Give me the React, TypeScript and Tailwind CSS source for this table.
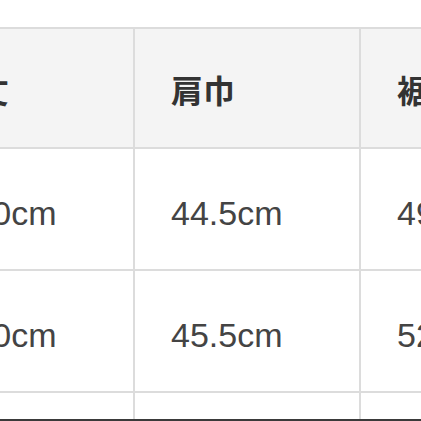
const header = ["着丈", "肩巾", "裾幅"];

const rows = [
  ["70.0cm", "44.5cm", "49.0cm"],
  ["72.0cm", "45.5cm", "52.0cm"],
  ["74.0cm", "46.5cm", "55.0cm"],
];

export default function App() {
  return (
    <div className="flex h-[421px] w-[421px] flex-col overflow-hidden bg-white">
      <div className="flex-1 overflow-hidden">
        {/* size chart; the left column runs off the edge of the crop */}
        <div className="ml-[-93px] mt-[27px] grid w-max grid-cols-[224px_224px_224px] gap-[2px] bg-[#dcdcdc] p-[2px]">
          {header.map((h) => (
            <div
              key={h}
              className="flex h-[118px] items-center bg-[#f4f4f4] pl-[36px] pt-[2px] text-[32px] font-bold text-[#333] [font-family:'Noto_Sans_CJK_JP',sans-serif]"
            >
              {h}
            </div>
          ))}
          {rows.map((r, i) =>
            r.map((v, j) => (
              <div
                key={`${i}-${j}`}
                className="flex h-[120px] items-center bg-white pl-[36px] pt-[9px] text-[34px] text-[#444] [font-family:'Liberation_Sans',Arial,sans-serif]"
              >
                {v}
              </div>
            )),
          )}
        </div>
      </div>
      <div className="h-[2px] bg-[#3a3a3a]" />
    </div>
  );
}
